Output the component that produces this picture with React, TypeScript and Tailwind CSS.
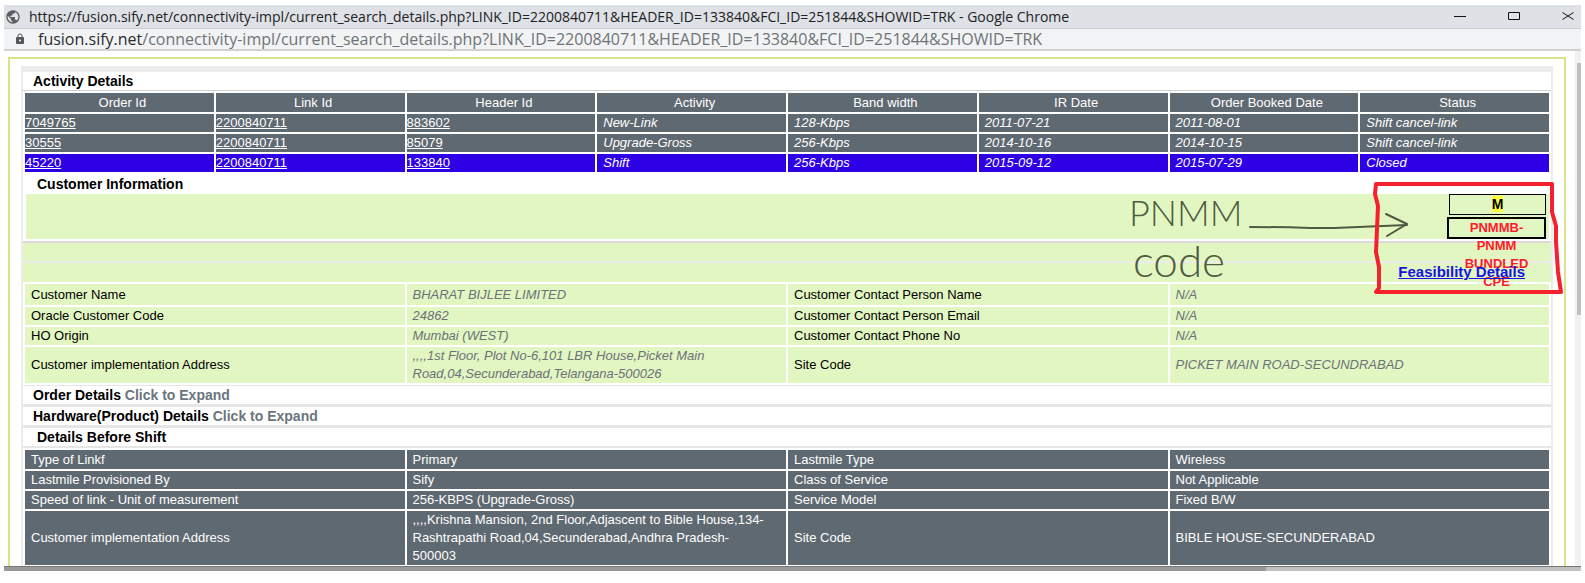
import React from "react";
import { MdLock, MdPublic } from "react-icons/md";

const ACTIVITY_HEADINGS = [
  "Order Id",
  "Link Id",
  "Header Id",
  "Activity",
  "Band width",
  "IR Date",
  "Order Booked Date",
  "Status",
];

type Activity = { links: string[]; values: string[]; current?: boolean };

const ACTIVITIES: Activity[] = [
  {
    links: ["7049765", "2200840711", "883602"],
    values: ["New-Link", "128-Kbps", "2011-07-21", "2011-08-01", "Shift cancel-link"],
  },
  {
    links: ["30555", "2200840711", "85079"],
    values: ["Upgrade-Gross", "256-Kbps", "2014-10-16", "2014-10-15", "Shift cancel-link"],
  },
  {
    links: ["45220", "2200840711", "133840"],
    values: ["Shift", "256-Kbps", "2015-09-12", "2015-07-29", "Closed"],
    current: true,
  },
];

const CUSTOMER_ROWS = [
  ["Customer Name", "BHARAT BIJLEE LIMITED", "Customer Contact Person Name", "N/A"],
  ["Oracle Customer Code", "24862", "Customer Contact Person Email", "N/A"],
  ["HO Origin", "Mumbai (WEST)", "Customer Contact Phone No", "N/A"],
  [
    "Customer implementation Address",
    ",,,,1st Floor, Plot No-6,101 LBR House,Picket Main Road,04,Secunderabad,Telangana-500026",
    "Site Code",
    "PICKET MAIN ROAD-SECUNDRABAD",
  ],
];

const SHIFT_ROWS = [
  ["Type of Linkf", "Primary", "Lastmile Type", "Wireless"],
  ["Lastmile Provisioned By", "Sify", "Class of Service", "Not Applicable"],
  ["Speed of link - Unit of measurement", "256-KBPS (Upgrade-Gross)", "Service Model", "Fixed B/W"],
  [
    "Customer implementation Address",
    ",,,,Krishna Mansion, 2nd Floor,Adjascent to Bible House,134-Rashtrapathi Road,04,Secunderabad,Andhra Pradesh-500003",
    "Site Code",
    "BIBLE HOUSE-SECUNDERABAD",
  ],
];

const TABLE = "w-full table-fixed border-separate border-spacing-[2px] bg-white text-[13px] leading-[18px]";

function TitleBar() {
  return (
    <header className="flex h-6 shrink-0 items-center border-b border-[#c9ccd0] bg-[#dee1e6] pr-[7px] pl-px">
      <MdPublic className="size-4 shrink-0 text-[#5a5d61]" />
      <h1 className="ml-2 grow truncate font-['Open_Sans',sans-serif] text-[14px] leading-[22px] text-[#222]">
        https://fusion.sify.net/connectivity-impl/current_search_details.php?LINK_ID=2200840711&amp;HEADER_ID=133840&amp;FCI_ID=251844&amp;SHOWID=TRK - Google Chrome
      </h1>
      <div className="flex gap-[42px]">
        <button aria-label="Minimize" className="block">
          <svg className="h-3 w-3" viewBox="0 0 12 12" stroke="#111" fill="none">
            <path d="M0 5.5H12" />
          </svg>
        </button>
        <button aria-label="Maximize" className="block">
          <svg className="h-3 w-3" viewBox="0 0 12 12" stroke="#111" fill="none">
            <path d="M.5 1.5H11.5V8.5H.5Z" />
          </svg>
        </button>
        <button aria-label="Close" className="block">
          <svg className="h-3 w-3" viewBox="0 0 12 12" stroke="#111" fill="none">
            <path d="M.5 1.5L11.5 8.5M11.5 1.5L.5 8.5" />
          </svg>
        </button>
      </div>
    </header>
  );
}

function AddressBar() {
  return (
    <div className="flex h-[22px] shrink-0 items-center border-b-2 border-[#cfd1d3] bg-[#f1f3f4] pl-2.5">
      <MdLock className="size-3 shrink-0 text-[#55585c]" />
      <p className="ml-3 truncate font-['Open_Sans',sans-serif] text-[16px] leading-5 text-[#6f7377]">
        <span className="text-[#2b2d30]">fusion.sify.net</span>
        /connectivity-impl/current_search_details.php?LINK_ID=2200840711&amp;HEADER_ID=133840&amp;FCI_ID=251844&amp;SHOWID=TRK
      </p>
    </div>
  );
}

function ActivityTable() {
  return (
    <table className={TABLE}>
      <thead>
        <tr className="bg-[#5f6971] text-white">
          {ACTIVITY_HEADINGS.map((heading) => (
            <th key={heading} className="h-[19px] p-0 pl-1.5 font-normal">
              {heading}
            </th>
          ))}
        </tr>
      </thead>
      <tbody>
        {ACTIVITIES.map((row) => (
          <tr
            key={row.links[0]}
            className={row.current ? "bg-[#2e00e6] text-white" : "bg-[#5f6971] text-white"}
          >
            {row.links.map((link) => (
              <td key={link} className="p-0">
                <a href="#" className="underline">
                  {link}
                </a>
              </td>
            ))}
            {row.values.map((value, i) => (
              <td key={i} className="p-0 pl-1.5 italic">
                {value}
              </td>
            ))}
          </tr>
        ))}
      </tbody>
    </table>
  );
}

function CustomerSummary() {
  return (
    <div className="relative bg-[#ececec]">
      <div className="border-b-2 border-[#dcdadf] bg-white pr-0.5 pb-0.5 pl-[3px]">
        <div className="flex h-[45px] flex-col items-end gap-0.5 bg-[#e2f6c2] pr-[3px] text-center font-bold">
          <div className="h-[21px] w-[97px] border border-black leading-[19px]">
            <span className="bg-[#ffff3c]">M</span>
          </div>
          <div className="relative z-10 h-[22px] w-[99px] border-2 border-black px-2 text-[13px] text-[#ff1a2a]">
            PNMMB-PNMM BUNDLED CPE
          </div>
        </div>
      </div>
      <div className="mb-0.5 h-[18px] bg-[#e2f6c2]" />
      <div className="h-[19px] bg-[#e2f6c2] pr-[26px] text-right">
        <a href="#" className="relative z-20 text-[15px] font-bold text-[#1414e0] underline">
          Feasibility Details
        </a>
      </div>
      <Annotation />
    </div>
  );
}

function Annotation() {
  return (
    <div className="pointer-events-none absolute -top-3 -right-3 z-30 h-28 w-[434px] text-[#4f5a41]">
      <p className="absolute top-3 left-0 font-['Lato',sans-serif] text-[36px] leading-[36px] font-light">
        PNMM
      </p>
      <p className="absolute top-14 left-1 font-['Lato',sans-serif] text-[44px] leading-[44px] font-light">
        code
      </p>
      <svg className="absolute inset-0 size-full" viewBox="0 0 434 112" fill="none">
        <path
          d="M121 45Q150 45 181 46L205 46L278 43"
          stroke="currentColor"
          strokeWidth="2"
          strokeLinecap="round"
        />
        <path
          d="M257 32L278 42L258 54"
          stroke="currentColor"
          strokeWidth="2"
          strokeLinecap="round"
          strokeLinejoin="round"
        />
        <path
          d="M247 2L423 2L423 30L427 44L427 60L429 90L432 110L247 110L250 106L250 85L247 70L249 24L246 12Z"
          stroke="#f5222d"
          strokeWidth="4"
          strokeLinejoin="round"
        />
      </svg>
    </div>
  );
}

function CustomerTable() {
  return (
    <table className={TABLE}>
      <tbody>
        {CUSTOMER_ROWS.map((row, r) => (
          <tr key={row[0]} className={r === 0 ? "h-[21px] bg-[#e2f6c2]" : "bg-[#e2f6c2]"}>
            {row.map((text, i) =>
              i % 2 === 0 ? (
                <th key={i} scope="row" className="p-0 pl-1.5 text-left font-normal text-black">
                  {text}
                </th>
              ) : (
                <td key={i} className="p-0 pr-[18px] pl-1.5 text-[#6b7278] italic">
                  {text}
                </td>
              )
            )}
          </tr>
        ))}
      </tbody>
    </table>
  );
}

function ShiftTable() {
  return (
    <table className={TABLE}>
      <tbody>
        {SHIFT_ROWS.map((row, r) => (
          <tr key={row[0]} className={r === 0 ? "h-[19px] bg-[#5f6971] text-white" : "bg-[#5f6971] text-white"}>
            {row.map((text, i) =>
              i % 2 === 0 ? (
                <th key={i} scope="row" className="p-0 pl-1.5 text-left font-normal">
                  {text}
                </th>
              ) : (
                <td key={i} className="p-0 pr-[18px] pl-1.5">
                  {text}
                </td>
              )
            )}
          </tr>
        ))}
      </tbody>
    </table>
  );
}

function ExpandableBar({ title }: { title: string }) {
  return (
    <div className="mb-[3px] bg-white pl-2.5 font-bold text-black">
      {title} <button className="cursor-pointer text-[#6b757d]">Click to Expand</button>
    </div>
  );
}

export default function App() {
  return (
    <div className="h-screen bg-white px-1 pt-[5px] pb-3 font-['Liberation_Sans',Arial,sans-serif] text-[14px] leading-[18px]">
      <div className="flex h-full flex-col overflow-hidden">
        <TitleBar />
        <AddressBar />
        <div className="flex min-h-0 grow">
          <main className="min-w-0 grow overflow-hidden pt-1.5 pr-[9px] pl-1">
            <div className="border-2 border-[#d7e68c] px-[11px] pt-[7px]">
              <div className="border-x-2 border-t-[6px] border-[#ececec] bg-[#e6e6e6]">
                <h2 className="border-b border-[#cfcfcf] bg-white pl-2.5 font-bold text-black">
                  Activity Details
                </h2>
                <ActivityTable />
                <h2 className="bg-white pl-3.5 leading-[20px] font-bold text-black">Customer Information</h2>
                <CustomerSummary />
                <CustomerTable />
                <div className="pt-px">
                  <ExpandableBar title="Order Details" />
                  <ExpandableBar title="Hardware(Product) Details" />
                </div>
                <h2 className="mb-0.5 bg-white pl-3.5 font-bold text-black">Details Before Shift</h2>
                <ShiftTable />
              </div>
            </div>
          </main>
          <div className="w-1.5 shrink-0 bg-[#f1f1f1] pt-3 pl-0.5">
            <div className="h-1/2 bg-[#c1c1c1]" />
          </div>
        </div>
        <div className="h-[5px] shrink-0 border-t border-[#777] bg-[#c0c0c0]">
          <div className="h-full w-4/5 bg-[#999]" />
        </div>
      </div>
    </div>
  );
}
